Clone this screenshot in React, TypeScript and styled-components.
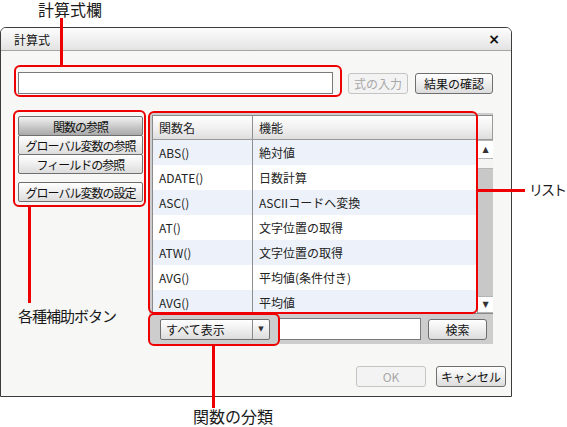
import styled, { createGlobalStyle, css } from "styled-components";

const GlobalStyle = createGlobalStyle`
  html, body {
    margin: 0;
    padding: 0;
    background: #ffffff;
  }
  body {
    font-family: "Noto Sans CJK JP", "Noto Sans", sans-serif;
    font-size: 12px;
    color: #222;
  }
`;

const Page = styled.div`
  position: relative;
  width: 567px;
  height: 427px;
  padding-top: 27px;
  box-sizing: border-box;
`;

const Dialog = styled.div`
  width: 512px;
  height: 370px;
  box-sizing: border-box;
  border: 1px solid #3c3c3c;
  border-radius: 6px 6px 0 0;
  background: #f7f8f5;
  display: flex;
  flex-direction: column;
`;

const TitleBar = styled.div`
  height: 22px;
  flex: none;
  display: flex;
  align-items: center;
  justify-content: space-between;
  padding: 0 11px 0 13px;
  border-radius: 5px 5px 0 0;
  border-bottom: 1px solid #a5a5a5;
  background: linear-gradient(#fdfdfd, #e3e3e3);
  font-size: 12px;
  color: #111;
`;

const Close = styled.span`
  font-family: "DejaVu Sans", sans-serif;
  font-weight: bold;
  font-size: 14px;
  line-height: 14px;
`;

const Body = styled.div`
  flex: 1;
  display: flex;
  flex-direction: column;
  padding: 21px 5px 9px 17px;
`;

const FormulaRow = styled.div`
  display: flex;
  align-items: center;
`;

const TextBox = styled.div<{ w: number }>`
  width: ${({ w }) => w}px;
  height: 22px;
  box-sizing: border-box;
  border: 1px solid #7a7a7a;
  background: #fff;
  flex: none;
`;

const Button = styled.div<{ w: number; disabled?: boolean; pressed?: boolean }>`
  width: ${({ w }) => w}px;
  height: 21px;
  box-sizing: border-box;
  flex: none;
  display: flex;
  align-items: center;
  justify-content: center;
  border: 1px solid #6f6f6f;
  border-radius: 3px;
  background: linear-gradient(#ffffff, #f0f0f0 45%, #dcdcdc);
  color: #111;
  font-size: 12px;
  ${({ disabled }) =>
    disabled &&
    css`
      border-color: #c4c4c4;
      background: #f3f3f3;
      color: #a8a8a8;
    `}
  ${({ pressed }) =>
    pressed &&
    css`
      background: linear-gradient(#f2f2f2, #c8c8c8 55%, #a9a9a9);
    `}
`;

const MainRow = styled.div`
  display: flex;
  margin-top: 19px;
`;

const SideButtons = styled.div`
  width: 125px;
  margin-top: 3px;
  display: flex;
  flex-direction: column;
  flex: none;
`;

const SideButton = styled(Button)`
  width: 125px;
  height: 20px;
  border-radius: 2px;
  letter-spacing: -1px;
  & + & {
    margin-top: -1px;
  }
`;

const SideGap = styled.div`
  height: 8px;
`;

const Panel = styled.div`
  margin-left: 6px;
  width: 344px;
  height: 231px;
  background: #cdcdcd;
  padding: 2px 0 0 3px;
  box-sizing: border-box;
  display: flex;
  flex-direction: column;
`;

const Table = styled.div`
  border: 1px solid #8a8a8a;
  border-right: none;
  background: #fff;
  display: flex;
  flex-direction: column;
`;

const HeaderRow = styled.div`
  display: flex;
  height: 23px;
  border-bottom: 1px solid #9a9a9a;
  border-right: 1px solid #9a9a9a;
  background: linear-gradient(#ffffff, #f1f1f1 50%, #dedede);
`;

const Cell = styled.div<{ first?: boolean }>`
  display: flex;
  align-items: center;
  padding-left: 6px;
  box-sizing: border-box;
  ${({ first }) =>
    first
      ? css`
          width: 100px;
          border-right: 1px solid #8f8f8f;
        `
      : css`
          flex: 1;
        `}
`;

const ListArea = styled.div`
  display: flex;
  height: 173px;
`;

const Rows = styled.div`
  flex: 1;
  overflow: hidden;
`;

const Row = styled.div<{ odd: boolean }>`
  display: flex;
  height: 25px;
  background: ${({ odd }) => (odd ? "#edf2fa" : "#ffffff")};
  font-size: 12px;
`;

const ScrollBar = styled.div`
  width: 15px;
  flex: none;
  border-left: 1px solid #9a9a9a;
  display: flex;
  flex-direction: column;
  background: #c8c8c8;
`;

const ScrollArrow = styled.div<{ h: number }>`
  height: ${({ h }) => h}px;
  flex: none;
  display: flex;
  align-items: center;
  justify-content: center;
  background: #ffffff;
  border-bottom: 1px solid #b5b5b5;
  border-top: 1px solid #b5b5b5;
  box-sizing: border-box;
  font-size: 8px;
  color: #333;
  font-family: "DejaVu Sans", sans-serif;
`;

const ScrollThumb = styled.div`
  height: 9px;
  flex: none;
  background: #f4f4f4;
  border-bottom: 1px solid #b5b5b5;
`;

const ScrollTrack = styled.div`
  flex: 1;
`;

const FilterRow = styled.div`
  height: 32px;
  display: flex;
  align-items: center;
  padding: 0 6px 0 8px;
`;

const Select = styled(Button)`
  width: 110px;
  justify-content: flex-start;
  border-radius: 2px;
`;

const SelectLabel = styled.span`
  flex: 1;
  padding-left: 5px;
`;

const SelectArrow = styled.span`
  width: 16px;
  height: 100%;
  border-left: 1px solid #8a8a8a;
  display: flex;
  align-items: center;
  justify-content: center;
  font-size: 7px;
  color: #333;
  font-family: "DejaVu Sans", sans-serif;
`;

const Footer = styled.div`
  margin-top: auto;
  display: flex;
  justify-content: flex-end;
  gap: 10px;
`;

// call-out marks drawn over the dialog
const Frame = styled.div`
  position: absolute;
  border: 2px solid #ee0000;
  border-radius: 6px;
  box-sizing: border-box;
  pointer-events: none;
`;

const Line = styled.div`
  position: absolute;
  background: #ee0000;
`;

const Label = styled.div<{ size?: number; tight?: number }>`
  position: absolute;
  font-size: ${({ size = 15 }) => size}px;
  line-height: 17px;
  letter-spacing: ${({ tight = 0 }) => -tight}px;
  color: #1a1a1a;
  white-space: nowrap;
`;

const functions: [string, string][] = [
  ["ABS()", "絶対値"],
  ["ADATE()", "日数計算"],
  ["ASC()", "ASCIIコードへ変換"],
  ["AT()", "文字位置の取得"],
  ["ATW()", "文字位置の取得"],
  ["AVG()", "平均値(条件付き)"],
  ["AVG()", "平均値"],
];

export default function App() {
  return (
    <Page>
      <GlobalStyle />
      <Dialog>
        <TitleBar>
          <span>計算式</span>
          <Close>×</Close>
        </TitleBar>
        <Body>
          <FormulaRow>
            <TextBox w={315} />
            <Button w={60} disabled style={{ marginLeft: 15 }}>
              式の入力
            </Button>
            <Button w={78} style={{ marginLeft: 7 }}>
              結果の確認
            </Button>
          </FormulaRow>
          <MainRow>
            <SideButtons>
              <SideButton w={125} pressed>
                関数の参照
              </SideButton>
              <SideButton w={125}>グローバル変数の参照</SideButton>
              <SideButton w={125}>フィールドの参照</SideButton>
              <SideGap />
              <SideButton w={125}>グローバル変数の設定</SideButton>
            </SideButtons>
            <Panel>
              <Table>
                <HeaderRow>
                  <Cell first>関数名</Cell>
                  <Cell>機能</Cell>
                </HeaderRow>
                <ListArea>
                  <Rows>
                    {functions.map(([name, desc], i) => (
                      <Row key={i} odd={i % 2 === 0}>
                        <Cell first>{name}</Cell>
                        <Cell>{desc}</Cell>
                      </Row>
                    ))}
                  </Rows>
                  <ScrollBar>
                    <ScrollArrow h={19}>▲</ScrollArrow>
                    <ScrollThumb />
                    <ScrollTrack />
                    <ScrollArrow h={17}>▼</ScrollArrow>
                  </ScrollBar>
                </ListArea>
              </Table>
              <FilterRow>
                <Select w={110}>
                  <SelectLabel>すべて表示</SelectLabel>
                  <SelectArrow>▼</SelectArrow>
                </Select>
                <TextBox w={143} style={{ marginLeft: 8 }} />
                <Button w={59} style={{ marginLeft: 7 }}>
                  検索
                </Button>
              </FilterRow>
            </Panel>
          </MainRow>
          <Footer>
            <Button w={70} disabled>
              OK
            </Button>
            <Button w={70}>キャンセル</Button>
          </Footer>
        </Body>
      </Dialog>

      <Frame style={{ left: 14, top: 65, width: 328, height: 32 }} />
      <Frame style={{ left: 13, top: 110, width: 133, height: 97 }} />
      <Frame style={{ left: 148, top: 111, width: 330, height: 203 }} />
      <Frame style={{ left: 148, top: 313, width: 132, height: 33 }} />

      <Line style={{ left: 60, top: 18, width: 3, height: 47 }} />
      <Line style={{ left: 478, top: 189, width: 47, height: 3 }} />
      <Line style={{ left: 28, top: 207, width: 3, height: 96 }} />
      <Line style={{ left: 212, top: 346, width: 3, height: 62 }} />

      <Label size={16} style={{ left: 38, top: 1 }}>
        計算式欄
      </Label>
      <Label size={14} tight={2} style={{ left: 529, top: 181 }}>
        リスト
      </Label>
      <Label size={15} tight={1} style={{ left: 18, top: 307 }}>
        各種補助ボタン
      </Label>
      <Label size={16} style={{ left: 193, top: 408 }}>
        関数の分類
      </Label>
    </Page>
  );
}
